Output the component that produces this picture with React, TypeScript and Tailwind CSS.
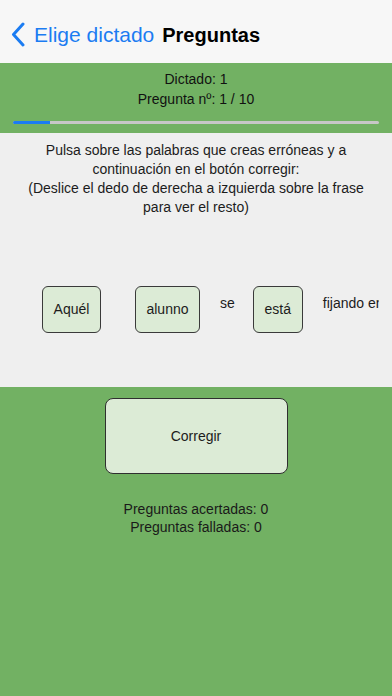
import React from "react";

const words: { text: string; boxed: boolean; ml: string; w?: string }[] = [
  { text: "Aquél", boxed: true, ml: "ml-[29px]", w: "w-[59px]" },
  { text: "alunno", boxed: true, ml: "ml-[34px]", w: "w-[65px]" },
  { text: "se", boxed: false, ml: "ml-[20px]" },
  { text: "está", boxed: true, ml: "ml-[18px]", w: "w-[50px]" },
  { text: "fijando en", boxed: false, ml: "ml-[20px]" },
];

export default function App() {
  return (
    <div
      className="w-[392px] h-[696px] flex flex-col bg-[#72b163] text-[#1c1c1c] overflow-hidden"
      style={{ fontFamily: '"Liberation Sans", Arial, sans-serif' }}
    >
      {/* Nav bar */}
      <header className="h-[63px] shrink-0 bg-[#f7f7f7] flex items-center pt-[6px] pl-[11px]">
        <svg width="14" height="25" viewBox="0 0 14 25" className="shrink-0">
          <polyline
            points="12,2 2.5,12.5 12,23"
            fill="none"
            stroke="#1b7cf2"
            strokeWidth="3"
            strokeLinecap="round"
            strokeLinejoin="round"
          />
        </svg>
        <span className="ml-[9px] text-[21px] text-[#1b7cf2]">Elige dictado</span>
        <span className="ml-[8px] text-[20px] font-bold text-black">Preguntas</span>
      </header>

      {/* Progress header */}
      <section className="shrink-0 pt-[6px] pb-[9px] px-[13px]">
        <div className="text-center text-[14px] leading-5 text-[#111]">
          <div>Dictado: 1</div>
          <div>Pregunta nº: 1 / 10</div>
        </div>
        <div className="mt-[12px] h-[3px] bg-[#c7c7c7] rounded-full overflow-hidden">
          <div className="h-full bg-[#1b7cf2]" style={{ width: "10%" }} />
        </div>
      </section>

      {/* Question area */}
      <section className="shrink-0 h-[254px] bg-[#efefef] pt-2">
        <p className="text-center text-[14px] leading-[19px] text-[#1c1c1c]">
          Pulsa sobre las palabras que creas erróneas y a
          <br />
          continuación en el botón corregir:
          <br />
          (Deslice el dedo de derecha a izquierda sobre la frase
          <br />
          para ver el resto)
        </p>
        <div className="mt-[69px] mx-[13px] flex items-start overflow-hidden whitespace-nowrap">
          {words.map((w) =>
            w.boxed ? (
              <button
                key={w.text}
                className={`${w.ml} ${w.w} shrink-0 h-[47px] rounded-[6px] border-[1.5px] border-[#3a3a3a] bg-[#dcebd6] text-[14px] text-[#1c1c1c] flex items-center justify-center`}
              >
                {w.text}
              </button>
            ) : (
              <span key={w.text} className={`${w.ml} shrink-0 pt-[7px] text-[14px] text-[#1c1c1c]`}>
                {w.text}
              </span>
            )
          )}
        </div>
      </section>

      {/* Bottom */}
      <section className="flex flex-col items-center pt-[11px]">
        <button className="w-[183px] h-[76px] rounded-[8px] border-[1.5px] border-[#2f2f2f] bg-[#dcebd6] text-[14px] text-[#1c1c1c]">
          Corregir
        </button>
        <div className="mt-[26px] text-center text-[14px] leading-[18px] text-[#1a1a1a]">
          <div>Preguntas acertadas: 0</div>
          <div>Preguntas falladas: 0</div>
        </div>
      </section>
    </div>
  );
}
